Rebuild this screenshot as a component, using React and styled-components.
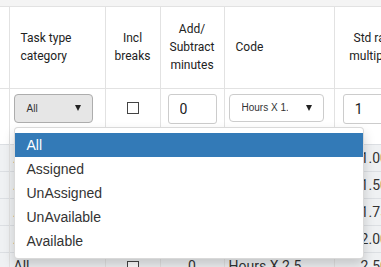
import React from 'react';
import styled, { createGlobalStyle } from 'styled-components';

const GlobalStyle = createGlobalStyle`
  html, body {
    margin: 0;
    padding: 0;
    background: #fff;
    overflow: hidden;
  }
  body {
    font-family: Roboto, "Liberation Sans", Arial, sans-serif;
  }
`;

const rows = [
  { category: 'All', minutes: '0', code: 'Hours X 1.0', rate: '1.00' },
  { category: 'All', minutes: '0', code: 'Hours X 1.5', rate: '1.50' },
  { category: 'All', minutes: '0', code: 'Hours X 1.75', rate: '1.75' },
  { category: 'All', minutes: '0', code: 'Hours X 2.0', rate: '2.00' },
  { category: 'All', minutes: '0', code: 'Hours X 2.5', rate: '2.50' },
];

const options = ['All', 'Assigned', 'UnAssigned', 'UnAvailable', 'Available'];

const App = () => {
  const [open] = React.useState(true);
  const [selected, setSelected] = React.useState('All');

  return (
    <Page>
      <GlobalStyle />
      <TopStrip />
      <Grid>
        <colgroup>
          <col style={{ width: 9 }} />
          <col style={{ width: 96 }} />
          <col style={{ width: 55 }} />
          <col style={{ width: 64 }} />
          <col style={{ width: 110 }} />
          <col style={{ width: 80 }} />
        </colgroup>
        <thead>
          <HeadRow>
            <HeadCell />
            <HeadCell>Task type<br />category</HeadCell>
            <HeadCell center>Incl<br />breaks</HeadCell>
            <HeadCell center>Add/<br />Subtract<br />minutes</HeadCell>
            <HeadCell>Code</HeadCell>
            <HeadCell center>Std rate<br />multiplier</HeadCell>
          </HeadRow>
        </thead>
        <tbody>
          <FilterRow>
            <FilterCell />
            <FilterCell>
              <SelectWrap>
                <SelectButton active>
                  <span>{selected}</span>
                  <Caret />
                </SelectButton>
                {open && (
                  <Menu>
                    {options.map((opt) => (
                      <MenuItem
                        key={opt}
                        selected={opt === selected}
                        onClick={() => setSelected(opt)}
                      >
                        {opt}
                      </MenuItem>
                    ))}
                  </Menu>
                )}
              </SelectWrap>
            </FilterCell>
            <FilterCell center>
              <Check />
            </FilterCell>
            <FilterCell center>
              <NumberInput defaultValue="0" width={49} />
            </FilterCell>
            <FilterCell>
              <SelectButton width={95}>
                <Clip>Hours X 1.0</Clip>
                <Caret />
              </SelectButton>
            </FilterCell>
            <FilterCell center>
              <NumberInput defaultValue="1" width={63} />
            </FilterCell>
          </FilterRow>
          {rows.map((row, i) => (
            <DataRow key={i}>
              <DataCell />
              <DataCell>{row.category}</DataCell>
              <DataCell center>
                <Check />
              </DataCell>
              <DataCell center>{row.minutes}</DataCell>
              <DataCell>{row.code}</DataCell>
              <DataCell center>{row.rate}</DataCell>
            </DataRow>
          ))}
        </tbody>
      </Grid>
    </Page>
  );
};

const Page = styled.div`
  width: 381px;
  height: 267px;
  overflow: hidden;
  position: relative;
`;

const TopStrip = styled.div`
  height: 6px;
  background: #f4f4f4;
  border-bottom: 1px solid #e2e2e2;
`;

const Grid = styled.table`
  border-collapse: collapse;
  table-layout: fixed;
  width: 414px;
`;

const HeadRow = styled.tr`
  height: 81px;
  border-bottom: 1px solid #e2e2e2;
`;

const HeadCell = styled.th`
  font-size: 12px;
  font-weight: 400;
  line-height: 18px;
  color: #222;
  text-align: ${(p) => (p.center ? 'center' : 'left')};
  vertical-align: middle;
  padding: 0 0 0 ${(p) => (p.center ? 0 : 11)}px;
  border-left: 1px solid #e2e2e2;
  &:first-child {
    border-left: none;
  }
`;

const FilterRow = styled.tr`
  height: 56px;
`;

const FilterCell = styled.td`
  vertical-align: top;
  padding: 5px 4px 0;
  text-align: ${(p) => (p.center ? 'center' : 'left')};
  border-left: 1px solid #e2e2e2;
  &:first-child {
    border-left: none;
  }
`;

const SelectWrap = styled.div`
  position: relative;
`;

const SelectButton = styled.div`
  box-sizing: border-box;
  width: ${(p) => p.width || 79}px;
  height: ${(p) => (p.active ? 29 : 28)}px;
  display: flex;
  align-items: center;
  justify-content: space-between;
  padding: 0 11px 0 12px;
  border: 1px solid ${(p) => (p.active ? '#adadad' : '#ccc')};
  border-radius: 4px;
  background: ${(p) => (p.active ? '#e6e6e6' : '#fff')};
  font-family: "Liberation Sans", Arial, sans-serif;
  font-size: 10px;
  color: #333;
`;

const Clip = styled.span`
  width: 46px;
  overflow: hidden;
  white-space: nowrap;
`;

const Caret = styled.span`
  width: 0;
  height: 0;
  border-left: 3.5px solid transparent;
  border-right: 3.5px solid transparent;
  border-top: 6px solid #222;
`;

const Menu = styled.ul`
  position: absolute;
  top: 33px;
  left: 0;
  width: 350px;
  box-sizing: border-box;
  margin: 0;
  padding: 5px 0;
  list-style: none;
  background: #fff;
  border: 1px solid rgba(0, 0, 0, 0.15);
  border-radius: 4px;
  box-shadow: 0 6px 12px rgba(0, 0, 0, 0.175);
  z-index: 10;
`;

const MenuItem = styled.li`
  height: 24px;
  line-height: 24px;
  padding: 0 12px;
  font-family: "Liberation Sans", Arial, sans-serif;
  font-size: 14px;
  color: ${(p) => (p.selected ? '#fff' : '#333')};
  background: ${(p) => (p.selected ? '#337ab7' : 'transparent')};
`;

const Check = styled.span`
  display: inline-block;
  box-sizing: border-box;
  width: 12px;
  height: 12px;
  margin-top: 8px;
  border: 1px solid #444;
  background: #fff;
`;

const NumberInput = styled.input`
  box-sizing: border-box;
  width: ${(p) => p.width}px;
  height: 30px;
  padding: 0 11px;
  border: 1px solid #ccc;
  border-radius: 3px;
  font-family: Roboto, sans-serif;
  font-size: 14px;
  color: #222;
  outline: none;
`;

const DataRow = styled.tr`
  height: 27px;
  background: #eff1f3;
  border-top: 1px solid #dcdfe3;
`;

const DataCell = styled.td`
  padding: 0 4px;
  font-size: 14px;
  color: #333;
  text-align: ${(p) => (p.center ? 'center' : 'left')};
  vertical-align: middle;
  border-left: 1px solid #e2e2e2;
  white-space: nowrap;
  overflow: hidden;
  &:first-child {
    border-left: none;
  }
  ${Check} {
    margin-top: 0;
    vertical-align: middle;
  }
`;

export default App;
